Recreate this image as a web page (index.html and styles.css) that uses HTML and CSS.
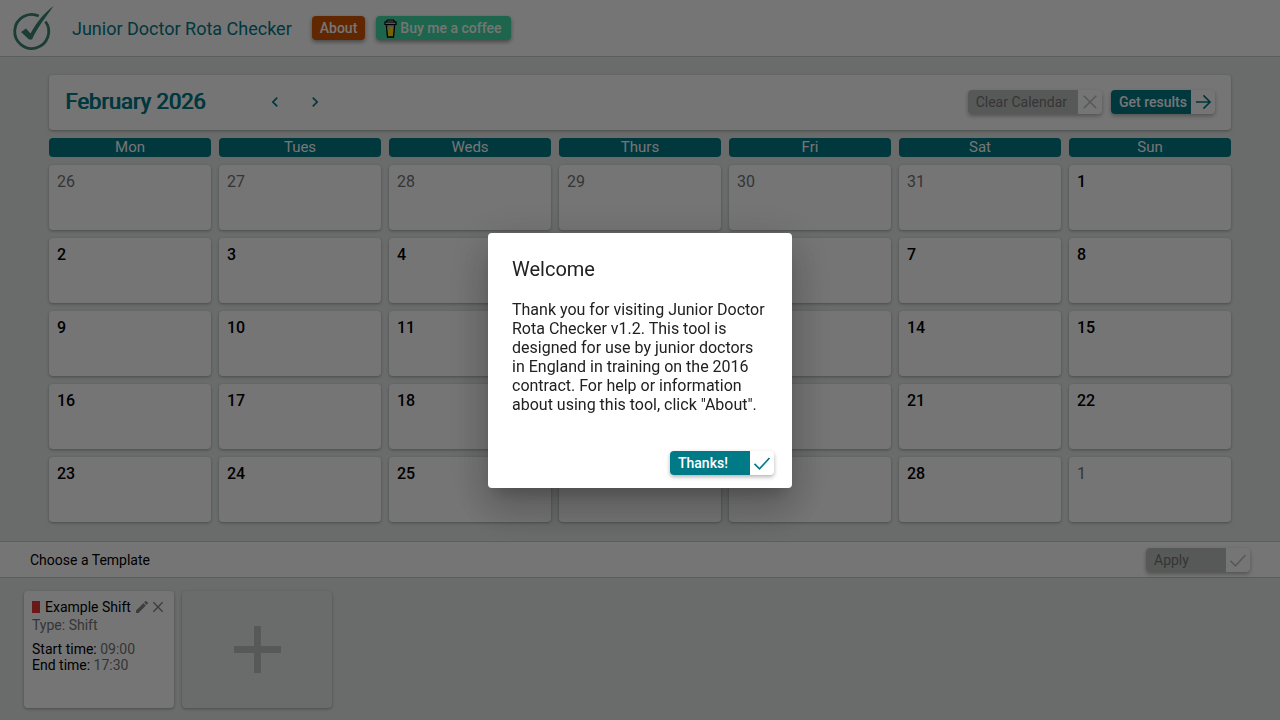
FILE: index.html
```html
<!DOCTYPE html>
<html lang="en">
<head>
    <meta charset="UTF-8">
    <meta name="viewport" content="width=device-width, initial-scale=1.0">
    <title>Junior Doctor Rota Checker</title>
    <link rel="stylesheet" href="styles.css">
</head>
<body>
    <header class="header">
        <svg class="logo" viewBox="0 0 44 48" aria-hidden="true">
            <path d="M27.800 12A17 17 0 1 0 34.500 17.500" fill="none" stroke="#3c8577" stroke-width="2.800"/>
            <path d="M10 28L15 24.500L19.500 29.500C26 18 33 9 42.500 2C35 13 26 24 21 35.500L18 35.500Z" fill="#3c8577"/>
        </svg>
        <h1 class="app-title">Junior Doctor Rota Checker</h1>
        <button type="button" class="header-btn about-btn">About</button>
        <a href="#coffee" class="header-btn coffee-btn">
            <svg class="coffee-icon" viewBox="0 0 13 19" aria-hidden="true">
                <path d="M2.500 7H10.500L9.500 18H3.500Z" fill="#ffdd00" stroke="#000" stroke-width="1.300"/>
                <path d="M3.500 1H9.500L11 3H2ZM1 3H12V5.500H1Z" fill="#b8bcba" stroke="#000" stroke-width="1.200"/>
                <path d="M3.200 6.200H9.800V8H6L5.500 11H3.700Z" fill="#b8bcba"/>
            </svg>
            Buy me a coffee
        </a>
    </header>

    <main class="main">
        <div class="toolbar">
            <h2 class="month">February 2026</h2>
            <button type="button" class="nav-btn" aria-label="Previous month">
                <svg viewBox="0 0 24 24"><path d="M15.400 7.400L14 6l-6 6 6 6 1.400-1.400L10.800 12z"/></svg>
            </button>
            <button type="button" class="nav-btn" aria-label="Next month">
                <svg viewBox="0 0 24 24"><path d="M10 6L8.600 7.400l4.600 4.600-4.600 4.600L10 18l6-6z"/></svg>
            </button>
            <div class="toolbar-actions">
                <button type="button" class="icon-btn" disabled>
                    <span class="btn-label">Clear Calendar</span>
                    <span class="btn-icon"><svg viewBox="0 0 24 24"><path d="M4.500 4.500l15 15M19.500 4.500l-15 15"/></svg></span>
                </button>
                <button type="button" class="icon-btn">
                    <span class="btn-label">Get results</span>
                    <span class="btn-icon"><svg viewBox="0 0 24 24"><path d="M3.500 12h16M12.500 4l8 8-8 8"/></svg></span>
                </button>
            </div>
        </div>

        <div class="weekdays">
            <div>Mon</div>
            <div>Tues</div>
            <div>Weds</div>
            <div>Thurs</div>
            <div>Fri</div>
            <div>Sat</div>
            <div>Sun</div>
        </div>

        <div class="days">
            <div class="day other">26</div>
            <div class="day other">27</div>
            <div class="day other">28</div>
            <div class="day other">29</div>
            <div class="day other">30</div>
            <div class="day other">31</div>
            <div class="day">1</div>
            <div class="day">2</div>
            <div class="day">3</div>
            <div class="day">4</div>
            <div class="day">5</div>
            <div class="day">6</div>
            <div class="day">7</div>
            <div class="day">8</div>
            <div class="day">9</div>
            <div class="day">10</div>
            <div class="day">11</div>
            <div class="day">12</div>
            <div class="day">13</div>
            <div class="day">14</div>
            <div class="day">15</div>
            <div class="day">16</div>
            <div class="day">17</div>
            <div class="day">18</div>
            <div class="day">19</div>
            <div class="day">20</div>
            <div class="day">21</div>
            <div class="day">22</div>
            <div class="day">23</div>
            <div class="day">24</div>
            <div class="day">25</div>
            <div class="day">26</div>
            <div class="day">27</div>
            <div class="day">28</div>
            <div class="day other">1</div>
        </div>
    </main>

    <section class="templates">
        <div class="template-bar">
            <span>Choose a Template</span>
            <button type="button" class="icon-btn" disabled>
                <span class="btn-label">Apply</span>
                <span class="btn-icon"><svg viewBox="0 0 24 24"><path d="M3 13l6 6L21 6"/></svg></span>
            </button>
        </div>
        <div class="template-list">
            <div class="template">
                <div class="template-head">
                    <span class="swatch"></span>
                    <span class="template-name">Example Shift</span>
                    <button type="button" class="small-btn" aria-label="Edit">
                        <svg viewBox="0 0 24 24"><path d="M3 17.250V21h3.750L17.800 9.900l-3.700-3.700zM20.700 7a1 1 0 0 0 0-1.400l-2.300-2.300a1 1 0 0 0-1.400 0l-1.800 1.800 3.700 3.700z" fill="#858585"/></svg>
                    </button>
                    <button type="button" class="small-btn" aria-label="Delete">
                        <svg viewBox="0 0 24 24"><path d="M5 5l14 14M19 5L5 19" stroke="#858585" stroke-width="2"/></svg>
                    </button>
                </div>
                <div class="template-type">Type: Shift</div>
                <div class="template-time">Start time: <span>09:00</span></div>
                <div class="template-time">End time: <span>17:30</span></div>
            </div>
            <button type="button" class="template add-template" aria-label="Add template">
                <svg viewBox="0 0 48 48"><path d="M24 0v48M0 24h48" stroke="#bdc2c0" stroke-width="7"/></svg>
            </button>
        </div>
    </section>

    <div class="backdrop">
        <div class="dialog" role="dialog" aria-modal="true" aria-labelledby="dialog-title">
            <h2 id="dialog-title" class="dialog-title">Welcome</h2>
            <p class="dialog-text">Thank you for visiting Junior Doctor Rota Checker v1.2. This tool is designed for use by junior doctors in England in training on the 2016 contract. For help or information about using this tool, click "About".</p>
            <div class="dialog-actions">
                <button type="button" class="icon-btn">
                    <span class="btn-label">Thanks!</span>
                    <span class="btn-icon"><svg viewBox="0 0 24 24"><path d="M3 13l6 6L21 6"/></svg></span>
                </button>
            </div>
        </div>
    </div>
</body>
</html>
```

FILE: styles.css
```css
* {
    box-sizing: border-box;
}
body {
    margin: 0;
    min-height: 100vh;
    display: flex;
    flex-direction: column;
    font-family: Roboto, sans-serif;
    font-size: 14px;
    color: #000;
    background: #e5ebe9;
}
button {
    font: inherit;
    padding: 0;
    border: none;
    background: none;
    cursor: pointer;
}
svg {
    display: block;
}
h1, h2, p {
    margin: 0;
    font-weight: 400;
}

/* header */
.header {
    display: flex;
    align-items: center;
    height: 57px;
    padding: 0 11px;
    background: #fff;
    border-bottom: 1px solid #c4cccb;
}
.logo {
    width: 44px;
    height: 48px;
}
.app-title {
    margin: 0 20px 0 17px;
    font-size: 18px;
    color: #007a87;
}
.header-btn {
    display: flex;
    align-items: center;
    height: 24px;
    padding: 0 8px;
    margin-right: 11px;
    border-radius: 4px;
    color: #fff;
    font-weight: 500;
    text-decoration: none;
    box-shadow: 0 2px 4px rgba(0,0,0,0.4);
}
.about-btn {
    background: #d45500;
}
.coffee-btn {
    gap: 3px;
    padding-right: 10px;
    background: #40dca5;
}
.coffee-icon {
    width: 13px;
    height: 19px;
}

/* calendar */
.main {
    flex: 1;
    display: flex;
    flex-direction: column;
    gap: 8px;
    padding: 18px 49px 19px;
}
.toolbar {
    display: flex;
    align-items: center;
    height: 55px;
    padding: 0 16px 2px;
    background: #fff;
    border-radius: 4px;
    box-shadow: 0 1px 3px rgba(0,0,0,0.3);
}
.month {
    width: 190px;
    font-size: 22px;
    color: #007a87;
    text-shadow: 1px 0 #007a87;
}
.nav-btn {
    width: 40px;
    height: 40px;
    padding: 10px;
}
.nav-btn svg {
    width: 20px;
    height: 20px;
    fill: #007a87;
}
.toolbar-actions {
    display: flex;
    gap: 9px;
    margin-left: auto;
}
.icon-btn {
    display: flex;
    height: 24px;
    border-radius: 4px;
    overflow: hidden;
    background: #fff;
    font-weight: 500;
    box-shadow: 0 2px 4px rgba(0,0,0,0.3);
}
.btn-label {
    min-width: 80px;
    padding: 0 4px 0 8px;
    line-height: 24px;
    text-align: left;
    color: #fff;
    background: #007a87;
}
.btn-icon {
    width: 24px;
    padding: 2px;
}
.btn-icon svg {
    width: 20px;
    height: 20px;
    fill: none;
    stroke: #007a87;
    stroke-width: 2;
}
.icon-btn:disabled {
    font-weight: 400;
    cursor: default;
}
.icon-btn:disabled .btn-label {
    padding-right: 11px;
    color: #757575;
    background: #bdc2c0;
}
.icon-btn:disabled .btn-icon svg {
    stroke: #bdc2c0;
}
.weekdays, .days {
    display: grid;
    grid-template-columns: repeat(7, 1fr);
    gap: 8px;
}
.weekdays div {
    height: 19px;
    line-height: 18px;
    border-radius: 4px;
    font-size: 15px;
    text-align: center;
    color: #fff;
    background: #007a87;
}
.days {
    flex: 1;
    grid-auto-rows: minmax(60px, 1fr);
}
.day {
    padding: 8px;
    font-size: 16px;
    font-weight: 500;
    line-height: 18px;
    background: #fff;
    border-radius: 4px;
    box-shadow: 0 1px 3px rgba(0,0,0,0.3);
}
.day.other {
    font-weight: 400;
    color: #757575;
}

/* templates */
.template-bar {
    display: flex;
    align-items: center;
    justify-content: space-between;
    height: 37px;
    padding: 0 30px;
    background: #fff;
    border-top: 1px solid #c4cccb;
    border-bottom: 1px solid #c4cccb;
}
.template-list {
    display: flex;
    gap: 8px;
    padding: 13px 24px 12px;
}
.template {
    width: 150px;
    height: 117px;
    padding: 8px;
    background: #fff;
    border-radius: 4px;
    box-shadow: 0 1px 3px rgba(0,0,0,0.3);
}
.template-head {
    display: flex;
    align-items: center;
    height: 16px;
}
.swatch {
    width: 8px;
    height: 12px;
    margin-right: 5px;
    background: #e53935;
}
.template-name {
    margin-right: 3px;
}
.small-btn {
    width: 16px;
    height: 16px;
}
.small-btn svg {
    width: 16px;
    height: 16px;
}
.template-type {
    margin: 2px 0 8px;
    line-height: 16px;
    color: #757575;
}
.template-time {
    line-height: 16px;
}
.template-time span {
    color: #757575;
}
.add-template {
    display: flex;
    align-items: center;
    justify-content: center;
    background: #e5ebe9;
}
.add-template svg {
    width: 47px;
    height: 47px;
}

/* welcome dialog */
.backdrop {
    position: fixed;
    inset: 0;
    display: flex;
    align-items: center;
    justify-content: center;
    background: rgba(0,0,0,0.54);
}
.dialog {
    width: 304px;
    padding: 24px 18px 13px 24px;
    background: #fff;
    border-radius: 4px;
    box-shadow: 0 11px 15px -7px rgba(0,0,0,0.2), 0 24px 38px 3px rgba(0,0,0,0.14), 0 9px 46px 8px rgba(0,0,0,0.12);
}
.dialog-title {
    margin-bottom: 19px;
    font-size: 20px;
    line-height: 24px;
    color: #212121;
}
.dialog-text {
    padding-right: 6px;
    font-size: 16px;
    line-height: 19px;
    color: #212121;
}
.dialog-actions {
    display: flex;
    justify-content: flex-end;
    margin-top: 37px;
}
```
